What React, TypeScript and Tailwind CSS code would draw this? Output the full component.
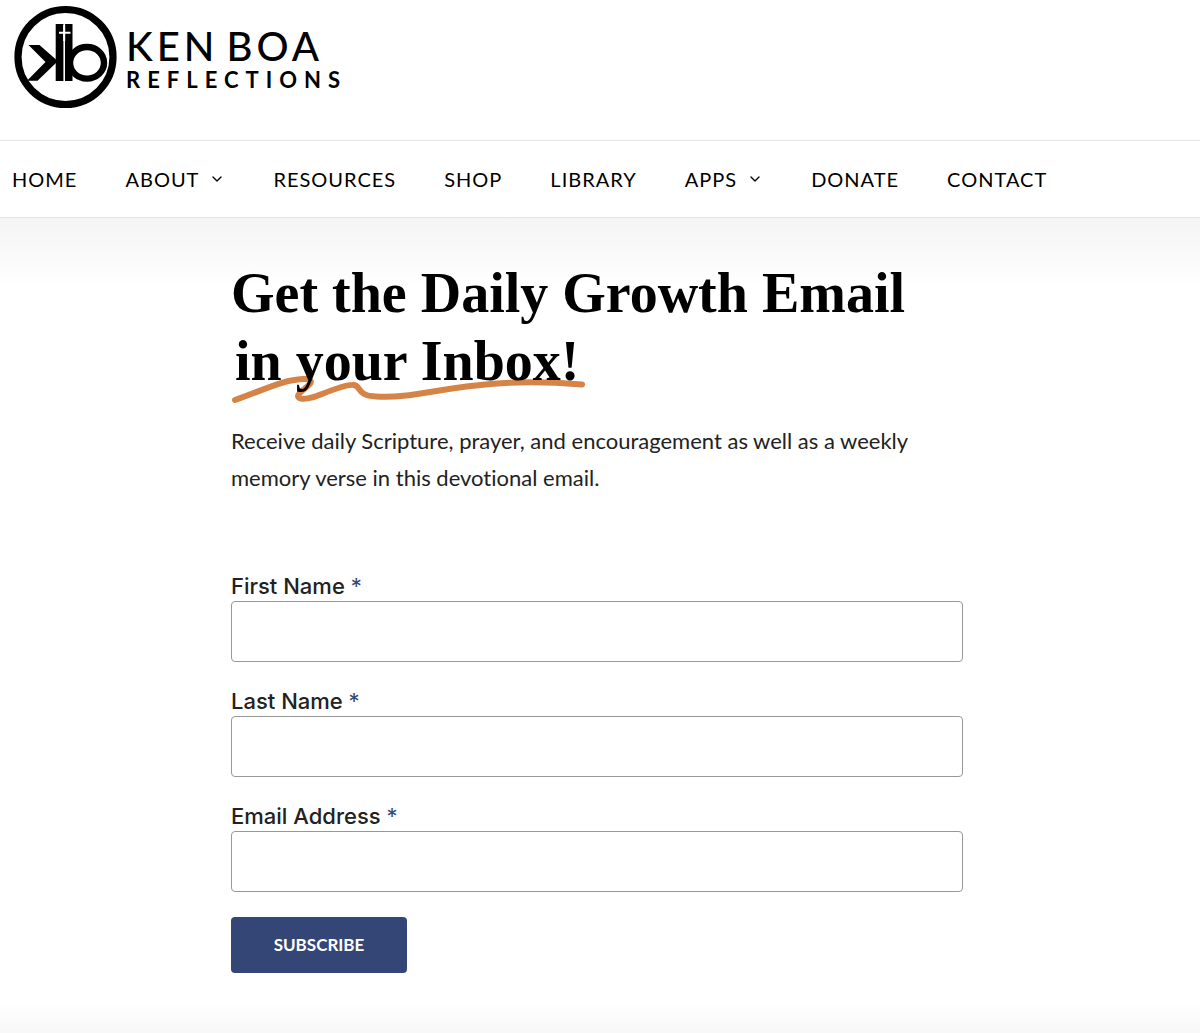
import { ChevronDown } from "lucide-react";

const navItems = [
  { label: "HOME" },
  { label: "ABOUT", menu: true },
  { label: "RESOURCES" },
  { label: "SHOP" },
  { label: "LIBRARY" },
  { label: "APPS", menu: true },
  { label: "DONATE" },
  { label: "CONTACT" },
];

const fields = [
  { id: "first-name", label: "First Name", type: "text" },
  { id: "last-name", label: "Last Name", type: "text" },
  { id: "email", label: "Email Address", type: "email" },
];

function LogoMark() {
  return (
    <svg viewBox="0 0 104 104" className="size-[104px] shrink-0" aria-hidden="true">
      <circle cx="51.5" cy="52" r="47.5" fill="none" stroke="#000" strokeWidth="7.2" />
      <path d="M14.5 40H25.5L42 54.5V58L23.5 75.7H13L31.5 57Z" fill="#000" />
      <path d="M41.7 19H58.5V76H41.7Z" fill="#000" />
      <ellipse cx="73" cy="57.8" rx="17" ry="15.8" fill="none" stroke="#000" strokeWidth="6.4" />
      <path d="M50.2 19V76" fill="none" stroke="#fff" strokeWidth="1.6" />
      <path d="M50.2 20V36M45 27.7H56.5" fill="none" stroke="#fff" strokeWidth="2" />
    </svg>
  );
}

function Scribble() {
  return (
    <svg
      viewBox="0 0 356 30"
      className="absolute top-[49px] left-0 -z-10 h-[30px] w-[356px]"
      fill="none"
      stroke="#d58346"
      strokeWidth="6"
      strokeLinecap="round"
      strokeLinejoin="round"
      aria-hidden="true"
    >
      <path d="M4 24C28 16 54 2 76 3C88 6 68 14 67 20C68 26 84 21 91 18C106 12 117 8 123 9C130 10 126 20 145 20.5C193 24 234 -1 351 8.5" />
    </svg>
  );
}

export default function App() {
  return (
    <div className="flex min-h-screen flex-col bg-white font-[Lato,sans-serif] text-black">
      <header>
        <div className="h-[140px] px-3.5 pt-[5px]">
          <a href="#" className="inline-flex items-center gap-2" aria-label="Ken Boa Reflections">
            <LogoMark />
            <span className="flex flex-col pt-1">
              <span className="flex gap-2 text-[40px] leading-[42px] font-medium tracking-[4px]">
                <span>KEN</span>
                <span>BOA</span>
              </span>
              <span className="text-[22px] leading-[26px] font-bold tracking-[7px]">REFLECTIONS</span>
            </span>
          </a>
        </div>
        <nav className="border-y border-[#e5e5e5]" aria-label="Main">
          <ul className="flex h-[76px] items-center gap-12 px-3 text-[20px] tracking-[1px]">
            {navItems.map((item) => (
              <li key={item.label}>
                <a href="#" className="flex items-center gap-2.5">
                  {item.label}
                  {item.menu && <ChevronDown size={16} strokeWidth={2} />}
                </a>
              </li>
            ))}
          </ul>
        </nav>
      </header>

      <main className="flex-1 bg-linear-to-b from-[#f4f4f4] to-white to-[70px] pt-[41px]">
        <div className="mx-auto w-full max-w-[738px] pr-1.5">
          <h1 className="isolate font-['Liberation_Serif',serif] text-[56px] leading-[68px] font-bold">
            Get the Daily Growth Email
            <br />
            <span className="relative inline-block pl-1">
              in your Inbox!
              <Scribble />
            </span>
          </h1>
          <p className="mt-[27px] text-[22px] leading-[37px] text-[#222] [font-variant-ligatures:no-common-ligatures]">
            Receive daily Scripture, prayer, and encouragement as well as a weekly memory verse in this
            devotional email.
          </p>
          <form className="mt-[75px]" onSubmit={(e) => e.preventDefault()}>
            {fields.map((f) => (
              <div key={f.id} className="mb-6">
                <label htmlFor={f.id} className="block font-[Inter,sans-serif] text-[22px] leading-[30px] font-medium text-[#222]">
                  {f.label} <span className="font-normal text-[#344675]">*</span>
                </label>
                <input
                  id={f.id}
                  type={f.type}
                  required
                  className="block h-[61px] w-full rounded border border-[#999] bg-white px-4 text-lg"
                />
              </div>
            ))}
            <button type="submit" className="mt-[25px] block h-14 w-44 rounded bg-[#344675] text-[17px] font-bold text-white">
              SUBSCRIBE
            </button>
          </form>
        </div>
      </main>
      <div className="h-8 bg-linear-to-b from-white to-[#f8f8f8]" />
    </div>
  );
}
